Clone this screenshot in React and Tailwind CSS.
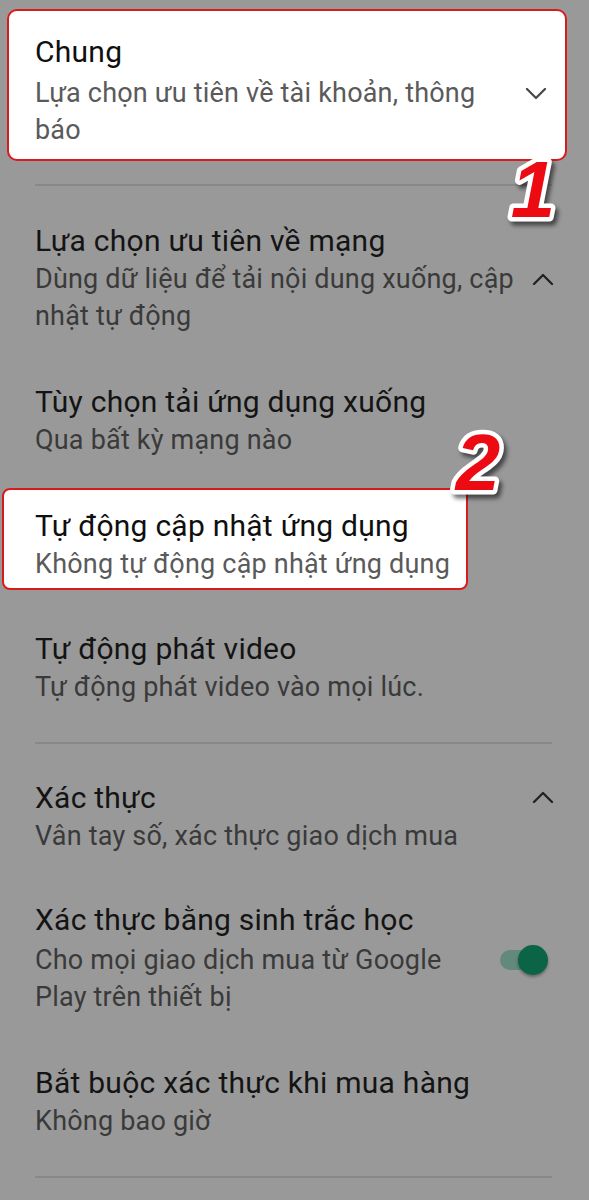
import React from "react";

const Chevron = ({ up, className }) => (
  <svg width="22" height="12" viewBox="0 0 22 12" className={className}>
    <path
      d={up ? "M2 11 L11 2 L20 11" : "M2 1 L11 10 L20 1"}
      fill="none"
      stroke="currentColor"
      strokeWidth="2.3"
      strokeLinecap="round"
      strokeLinejoin="round"
    />
  </svg>
);

const Num = ({ n, className }) => (
  <svg
    width="70"
    height="90"
    viewBox="0 0 70 90"
    className={className}
    style={{ filter: "drop-shadow(3px 4px 2px rgba(0,0,0,0.55))" }}
  >
    <text
      x="35"
      y="72"
      textAnchor="middle"
      fontFamily="'Liberation Sans', Arial, sans-serif"
      fontWeight="900"
      fontStyle="italic"
      fontSize="80"
      fill="#ec0b12"
      stroke="#ffffff"
      strokeWidth="9"
      strokeLinejoin="round"
      paintOrder="stroke"
    >
      {n}
    </text>
  </svg>
);

const Row = ({ title, subs, right, className = "", subClass = "" }) => (
  <div className={"flex items-start " + className}>
    <div className="flex-1 min-w-0">
      <div className="text-[30px] leading-[40px] tracking-[0.25px] text-[#141414]">{title}</div>
      <div className={"text-[27px] leading-[37px] tracking-[0.2px] text-[#3a3a3a] " + subClass}>{subs}</div>
    </div>
    {right}
  </div>
);

export default function App() {
  return (
    <div
      className="relative w-[589px] h-[1200px] bg-[#999999] overflow-hidden"
      style={{ fontFamily: "Roboto, 'Noto Sans', sans-serif" }}
    >
      {/* Card 1 */}
      <div className="mt-[9px] ml-[7px] w-[560px] rounded-[10px] border-2 border-[#d81c1c] bg-white pt-[21px] pb-[10px] pl-[26px]">
        <div className="flex items-start">
          <div className="w-[484px]">
            <div className="text-[30px] leading-[40px] tracking-[0.25px] text-[#0f0f0f]">Chung</div>
            <div className="mt-[3px] text-[27px] leading-[37px] tracking-[0.2px] text-[#5a5a5a]">
              Lựa chọn ưu tiên về tài khoản, thông báo
            </div>
          </div>
          <div className="flex-1 flex justify-end pt-[56px] pr-[18px]">
            <Chevron className="text-[#4a4a4a]" />
          </div>
        </div>
      </div>

      <div className="mt-[23px] mx-[35px] w-[517px] h-[2px] bg-[#888888]" />

      <div className="pl-[35px] pr-[37px]">
        <Row
          className="mt-[35px]"
          title="Lựa chọn ưu tiên về mạng"
          subs="Dùng dữ liệu để tải nội dung xuống, cập nhật tự động"
          right={
            <div className="w-[36px] flex justify-end pt-[52px] -mr-[2px]">
              <Chevron up className="text-[#222222]" />
            </div>
          }
        />
        <Row className="mt-[47px]" title="Tùy chọn tải ứng dụng xuống" subs="Qua bất kỳ mạng nào" />
      </div>

      {/* Card 2 */}
      <div className="mt-[29px] ml-[2px] w-[466px] rounded-[8px] border-2 border-[#d81c1c] bg-white pt-[16px] pb-[5px] pl-[31px]">
        <div className="text-[30px] leading-[40px] tracking-[0.25px] text-[#0f0f0f] whitespace-nowrap">Tự động cập nhật ứng dụng</div>
        <div className="text-[27px] leading-[37px] tracking-[0.2px] text-[#5a5a5a] whitespace-nowrap">Không tự động cập nhật ứng dụng</div>
      </div>

      <div className="pl-[35px] pr-[37px]">
        <Row className="mt-[39px]" title="Tự động phát video" subs="Tự động phát video vào mọi lúc." />
      </div>

      <div className="mt-[36px] mx-[35px] w-[517px] h-[2px] bg-[#888888]" />

      <div className="pl-[35px] pr-[37px]">
        <Row
          className="mt-[34px]"
          title="Xác thực"
          subs="Vân tay số, xác thực giao dịch mua"
          right={
            <div className="w-[36px] flex justify-end pt-[13px] -mr-[2px]">
              <Chevron up className="text-[#222222]" />
            </div>
          }
        />
        <Row
          className="mt-[45px]"
          title="Xác thực bằng sinh trắc học"
          subClass="mt-[2px] w-[440px]"
          subs="Cho mọi giao dịch mua từ Google Play trên thiết bị"
          right={
            <div className="relative w-[60px] h-[34px] mt-[43px] -mr-[4px] shrink-0">
              <div className="absolute left-[4px] top-[7px] w-[44px] h-[20px] rounded-full bg-[#62897b]" />
              <div className="absolute left-[22px] top-[2px] w-[30px] h-[30px] rounded-full bg-[#0b6445] shadow-[0_2px_3px_rgba(0,0,0,0.35)]" />
            </div>
          }
        />
        <Row className="mt-[47px]" title="Bắt buộc xác thực khi mua hàng" subs="Không bao giờ" />
      </div>

      <div className="mt-[36px] mx-[35px] w-[517px] h-[2px] bg-[#888888]" />

      <Num n="1" className="absolute left-[498px] top-[145px]" />
      <Num n="2" className="absolute left-[443px] top-[418px]" />
    </div>
  );
}
